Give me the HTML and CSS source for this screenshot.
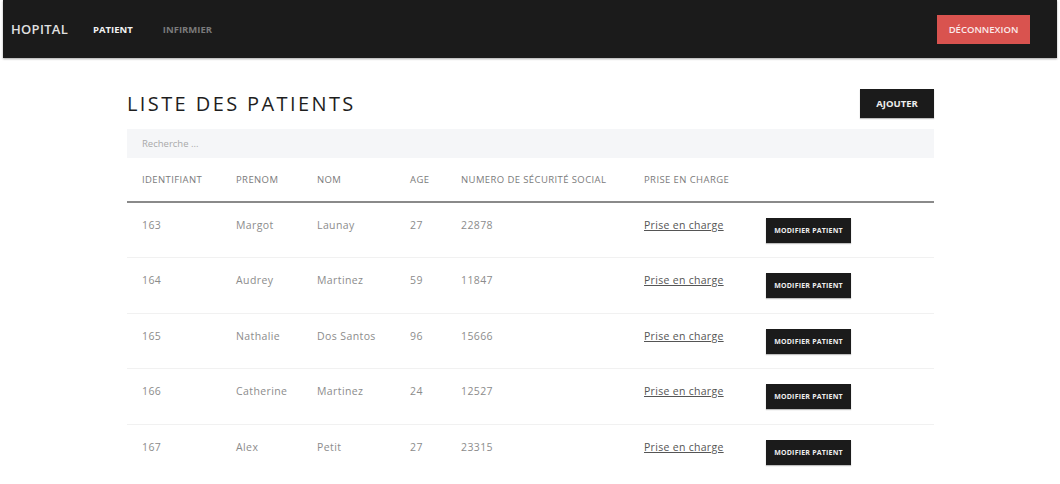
FILE: index.html
```html
<!DOCTYPE html>
<html lang="fr">
<head>
<meta charset="utf-8">
<title>Hopital - Patients</title>
<link rel="stylesheet" href="styles.css">
</head>
<body>
<nav class="navbar">
  <div class="nav-left">
    <span class="brand">HOPITAL</span>
    <a class="nav-link active" href="#">PATIENT</a>
    <a class="nav-link" href="#">INFIRMIER</a>
  </div>
  <button class="btn-logout">DÉCONNEXION</button>
</nav>
<main class="container">
  <div class="title-row">
    <h1 class="title">LISTE DES PATIENTS</h1>
    <button class="btn-dark btn-add">AJOUTER</button>
  </div>
  <input class="search" type="text" placeholder="Recherche ...">
  <table class="table">
    <thead>
      <tr>
        <th class="c-id">IDENTIFIANT</th>
        <th class="c-pre">PRENOM</th>
        <th class="c-nom">NOM</th>
        <th class="c-age">AGE</th>
        <th class="c-num">NUMERO DE SÉCURITÉ SOCIAL</th>
        <th class="c-pec">PRISE EN CHARGE</th>
        <th class="c-act"></th>
      </tr>
    </thead>
    <tbody>
      <tr><td>163</td><td>Margot</td><td>Launay</td><td>27</td><td>22878</td><td><a class="pec" href="#">Prise en charge</a></td><td><button class="btn-dark btn-mod">MODIFIER PATIENT</button></td></tr>
      <tr><td>164</td><td>Audrey</td><td>Martinez</td><td>59</td><td>11847</td><td><a class="pec" href="#">Prise en charge</a></td><td><button class="btn-dark btn-mod">MODIFIER PATIENT</button></td></tr>
      <tr><td>165</td><td>Nathalie</td><td>Dos Santos</td><td>96</td><td>15666</td><td><a class="pec" href="#">Prise en charge</a></td><td><button class="btn-dark btn-mod">MODIFIER PATIENT</button></td></tr>
      <tr><td>166</td><td>Catherine</td><td>Martinez</td><td>24</td><td>12527</td><td><a class="pec" href="#">Prise en charge</a></td><td><button class="btn-dark btn-mod">MODIFIER PATIENT</button></td></tr>
      <tr><td>167</td><td>Alex</td><td>Petit</td><td>27</td><td>23315</td><td><a class="pec" href="#">Prise en charge</a></td><td><button class="btn-dark btn-mod">MODIFIER PATIENT</button></td></tr>
    </tbody>
  </table>
</main>
</body>
</html>
```
FILE: styles.css
```css
* { box-sizing: border-box; }
html, body { margin: 0; padding: 0; background: #fff; }
body {
  font-family: "Open Sans", "Noto Sans", sans-serif;
  color: #777;
  overflow: hidden;
}
.navbar {
  margin: 0 3px;
  height: 58px;
  background: #1b1b1b;
  display: flex;
  align-items: center;
  justify-content: space-between;
  padding: 0 27px 0 8px;
  box-shadow: 0 1px 2px rgba(0,0,0,0.35);
}
.nav-left { display: flex; align-items: center; }
.brand {
  color: #e0e0e0;
  font-size: 13px;
  font-weight: 600;
  letter-spacing: 0.3px;
  margin-right: 25px;
}
.nav-link {
  text-decoration: none;
  font-size: 9.5px;
  font-weight: 700;
  color: #7a7a7a;
  margin-right: 30px;
}
.nav-link.active { color: #f2f2f2; }
.btn-logout {
  background: #d9534f;
  color: #fbeaea;
  border: none;
  font-family: inherit;
  font-size: 9.5px;
  font-weight: 600;
  width: 93px;
  height: 29px;
  padding: 0;
}
.container {
  width: 807px;
  margin: 0 0 0 127px;
}
.title-row {
  display: flex;
  justify-content: space-between;
  align-items: center;
  margin-top: 31px;
  height: 29px;
}
.title {
  margin: 0;
  font-size: 20px;
  font-weight: 400;
  letter-spacing: 2.4px;
  color: #1e1e1e;
}
.btn-dark {
  background: #1b1b1b;
  color: #eee;
  border: none;
  font-family: inherit;
  font-weight: 700;
  box-shadow: 0 1px 1px rgba(0,0,0,0.25);
  padding: 0;
}
.btn-add {
  width: 74px;
  height: 29px;
  font-size: 9.5px;
}
.search {
  display: block;
  width: 100%;
  height: 29px;
  margin-top: 11px;
  border: none;
  background: #f5f6f8;
  padding: 0 15px;
  font-family: inherit;
  font-size: 9.5px;
  color: #555;
  outline: none;
}
.search::placeholder { color: #a9a9a9; }
.table {
  width: 100%;
  border-collapse: collapse;
  table-layout: fixed;
}
.table th {
  text-align: left;
  font-size: 9.5px;
  font-weight: 500;
  color: #7b7b7b;
  letter-spacing: 0.4px;
  padding: 0 0 0 15px;
  height: 44px;
  border-bottom: 2px solid #8a8a8a;
  white-space: nowrap;
}
.c-id { width: 94px; }
.c-pre { width: 81px; }
.c-nom { width: 93px; }
.c-age { width: 51px; }
.c-num { width: 183px; }
.c-pec { width: 122px; }
.table td {
  padding: 0 0 0 15px;
  height: 55.5px;
  font-size: 10.5px;
  color: #8c8c8c;
  letter-spacing: 0.4px;
  border-bottom: 1px solid #f1f1f1;
  vertical-align: top;
  padding-top: 15px;
}
.table tbody tr:last-child td { border-bottom: none; }
.pec {
  color: #555;
  text-decoration: underline;
  letter-spacing: 0.3px;
}
.btn-mod {
  width: 85px;
  height: 25px;
  font-size: 7px;
  letter-spacing: 0.2px;
  margin-top: 0;
}
```
